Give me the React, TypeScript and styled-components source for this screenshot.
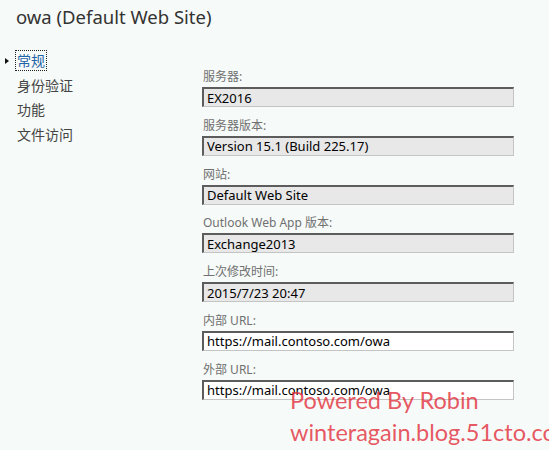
import React, { FC } from 'react';
import styled, { createGlobalStyle } from 'styled-components';

const GlobalStyle = createGlobalStyle`
  html, body {
    margin: 0;
    padding: 0;
    background: #f6faf8;
  }
  * {
    box-sizing: border-box;
  }
`;

const Page = styled.div`
  position: relative;
  width: 549px;
  height: 450px;
  overflow: hidden;
  background: #f6faf8;
  font-family: 'Noto Sans', 'Noto Sans CJK SC', sans-serif;
`;

const Title = styled.h1`
  margin: 0;
  padding: 4px 0 0 16px;
  height: 49px;
  font-size: 18.5px;
  font-weight: 400;
  line-height: 26px;
  color: #333;
`;

const Body = styled.div`
  display: flex;
`;

const Nav = styled.ul`
  list-style: none;
  margin: 0;
  padding: 0 0 0 16px;
  width: 202px;
`;

const NavItem = styled.li<{ $active?: boolean }>`
  position: relative;
  font-size: 14px;
  line-height: 24.7px;
  color: ${({ $active }) => ($active ? '#1f64a8' : '#444')};

  span {
    padding: 0 1px;
    outline: ${({ $active }) => ($active ? '1px dotted #222' : 'none')};
  }

  &::before {
    content: '';
    display: ${({ $active }) => ($active ? 'block' : 'none')};
    position: absolute;
    left: -11px;
    top: 9px;
    border-top: 3.5px solid transparent;
    border-bottom: 3.5px solid transparent;
    border-left: 4px solid #111;
  }
`;

const Form = styled.div`
  display: flex;
  flex-direction: column;
  width: 312px;
  padding-top: 19px;
`;

const Field = styled.div`
  display: flex;
  flex-direction: column;
  margin-bottom: 9.8px;
`;

const Label = styled.label`
  font-size: 12px;
  line-height: 17px;
  margin: 0 0 2px 1px;
  color: #707070;
`;

const Input = styled.input<{ $editable?: boolean }>`
  width: 312px;
  height: 20px;
  margin: 0;
  padding: 0 0 0 3px;
  font-family: 'Noto Sans', 'Noto Sans CJK SC', sans-serif;
  font-size: 13px;
  color: #000;
  background: ${({ $editable }) => ($editable ? '#ffffff' : '#e8e8e8')};
  border-style: solid;
  border-width: 2px 1px 1px 2px;
  border-color: #5c5c5c #c4c4c4 #c4c4c4 #5c5c5c;
  outline: none;
`;

const Watermark = styled.div`
  position: absolute;
  left: 290px;
  top: 384px;
  font-family: 'Lato', sans-serif;
  font-size: 23.5px;
  line-height: 32px;
  color: rgba(226, 44, 56, 0.8);
  white-space: nowrap;
  pointer-events: none;
`;

const fields = [
  { label: '服务器:', value: 'EX2016' },
  { label: '服务器版本:', value: 'Version 15.1 (Build 225.17)' },
  { label: '网站:', value: 'Default Web Site' },
  { label: 'Outlook Web App 版本:', value: 'Exchange2013' },
  { label: '上次修改时间:', value: '2015/7/23 20:47' },
  { label: '内部 URL:', value: 'https://mail.contoso.com/owa', editable: true },
  { label: '外部 URL:', value: 'https://mail.contoso.com/owa', editable: true },
];

const navItems = ['常规', '身份验证', '功能', '文件访问'];

const App: FC = () => (
  <Page>
    <GlobalStyle />
    <Title>owa (Default Web Site)</Title>
    <Body>
      <Nav>
        {navItems.map((item, i) => (
          <NavItem key={item} $active={i === 0}>
            <span>{item}</span>
          </NavItem>
        ))}
      </Nav>
      <Form>
        {fields.map((f) => (
          <Field key={f.label}>
            <Label>{f.label}</Label>
            <Input readOnly value={f.value} $editable={f.editable} />
          </Field>
        ))}
      </Form>
    </Body>
    <Watermark>
      Powered By Robin
      <br />
      winteragain.blog.51cto.com
    </Watermark>
  </Page>
);

export default App;
